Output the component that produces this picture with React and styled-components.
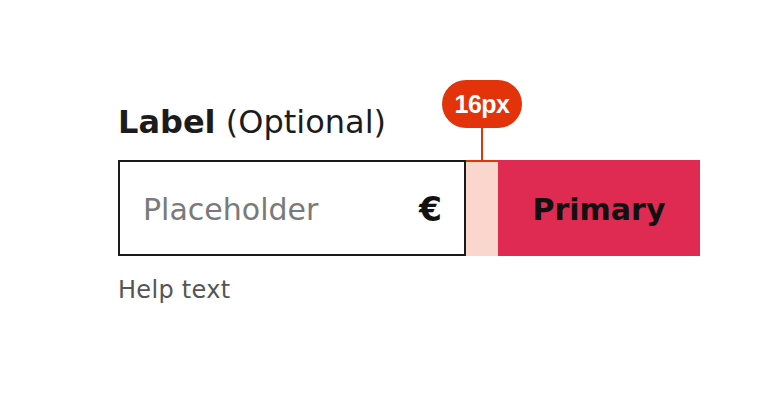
import React from 'react';
import styled, { createGlobalStyle } from 'styled-components';

const GlobalStyle = createGlobalStyle`
  html, body {
    margin: 0;
    padding: 0;
    background: #ffffff;
    font-family: "DejaVu Sans", "Liberation Sans", sans-serif;
  }
`;

const Page = styled.main`
  width: 762px;
  height: 416px;
  box-sizing: border-box;
  padding: 102px 0 0 118px;
`;

const Field = styled.div`
  display: flex;
  flex-direction: column;
  align-items: flex-start;
`;

const Label = styled.label`
  font-size: 32px;
  line-height: 40px;
  color: #1c1c1c;
  margin-bottom: 18px;

  strong {
    font-weight: 700;
  }
`;

const Row = styled.div`
  display: flex;
  height: 96px;
`;

const InputBox = styled.div`
  width: 348px;
  height: 96px;
  box-sizing: border-box;
  border: 2px solid #1a1a1a;
  display: flex;
  align-items: center;
  justify-content: space-between;
  padding: 3px 22px 0 23px;
`;

const Placeholder = styled.span`
  font-size: 30px;
  color: #7a7a7a;
`;

const Currency = styled.span`
  font-size: 33px;
  font-weight: 700;
  color: #111;
`;

// the 16px gap between input and button, with its measurement marker
const Spacer = styled.div`
  position: relative;
  width: 32px;
  height: 96px;
  background: #fad6cc;
  border-top: 2px solid #e2330b;
  box-sizing: border-box;
`;

const Badge = styled.div`
  position: absolute;
  left: 50%;
  bottom: 128px;
  transform: translateX(-50%);
  width: 80px;
  height: 48px;
  border-radius: 24px;
  background: #e2330b;
  color: #fff;
  font-family: "Liberation Sans", Arial, sans-serif;
  font-size: 25px;
  font-weight: 700;
  letter-spacing: -0.5px;
  display: flex;
  align-items: center;
  justify-content: center;
`;

const Stem = styled.div`
  position: absolute;
  left: 15px;
  bottom: 96px;
  width: 2px;
  height: 32px;
  background: #e2330b;
`;

const PrimaryButton = styled.button`
  width: 202px;
  height: 96px;
  border: none;
  padding: 3px 0 0;
  background: #df2a52;
  color: #111;
  font-family: inherit;
  font-size: 30px;
  font-weight: 700;
  cursor: pointer;
`;

const Help = styled.p`
  margin: 18px 0 0;
  font-size: 24px;
  line-height: 32px;
  color: #555;
  letter-spacing: 0.3px;
`;

export default function App() {
  return (
    <>
      <GlobalStyle />
      <Page>
        <Field>
          <Label>
            <strong>Label</strong> (Optional)
          </Label>
          <Row>
            <InputBox>
              <Placeholder>Placeholder</Placeholder>
              <Currency>€</Currency>
            </InputBox>
            <Spacer>
              <Stem />
              <Badge>16px</Badge>
            </Spacer>
            <PrimaryButton type='button'>Primary</PrimaryButton>
          </Row>
          <Help>Help text</Help>
        </Field>
      </Page>
    </>
  );
}
